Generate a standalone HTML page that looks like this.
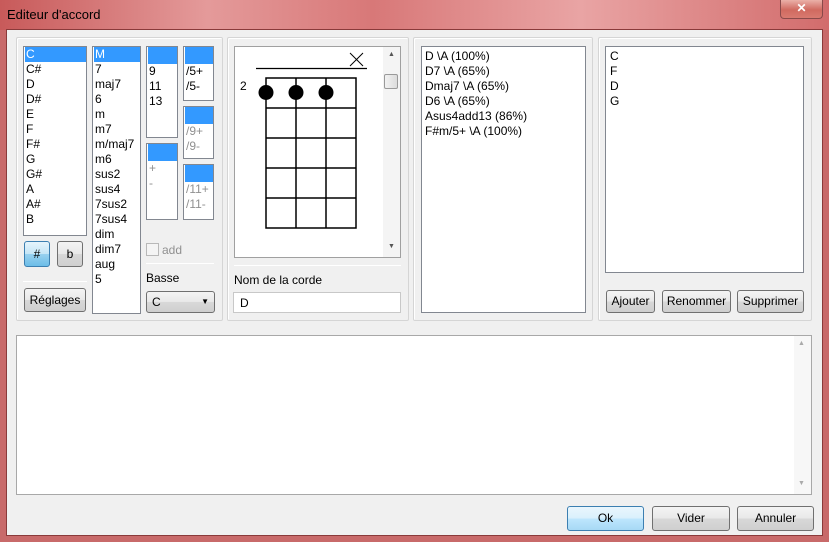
<!DOCTYPE html>
<html><head><meta charset="utf-8"><style>
*{box-sizing:border-box;margin:0;padding:0}
body{width:829px;height:542px;overflow:hidden;font-family:"Liberation Sans",sans-serif;font-size:12px;color:#000;background:#c86a6a;position:relative}
.a{position:absolute}
.title{left:0;top:0;width:829px;height:30px;background:linear-gradient(90deg,#c85a5a 0%,#e49a9a 25%,#d87878 45%,#e9a4a4 70%,#d26c6c 100%)}
.client{left:6px;top:29px;width:817px;height:507px;background:#f0f0f0;border:1px solid #8a3a3a}
.grp{border:1px solid #d5d5d5;border-radius:2px;box-shadow:inset 1px 1px 0 #fff}
.list{background:#fff;border:1px solid #828790;line-height:15px;padding-left:2px}
.list .sel{margin-left:-1px;padding-left:1px}
.sel{background:#3399ff;color:#fff;display:block;height:15px}
.sel.e{height:17px}
.g{color:#909090}
.btn{border:1px solid #707070;border-radius:3px;background:linear-gradient(#f4f4f4,#e8e8e8 50%,#d8d8d8 51%,#cfcfcf);text-align:center;line-height:20px}
.hl{height:1px;background:#d5d5d5;border-bottom:1px solid #fff}
</style></head><body>
<div class="a title"></div>
<div class="a" style="left:7px;top:7px;font-size:13px;color:#000">Editeur d'accord</div>
<div class="a" style="left:780px;top:0;width:43px;height:19px;border:1px solid #8a4a4a;border-top:none;border-radius:0 0 4px 4px;background:linear-gradient(#eab0a8,#d06a60 55%,#d87a70);color:#fff;text-align:center;font-weight:bold;font-size:12px;line-height:17px">✕</div>
<div class="a client"></div>

<!-- panel 1 -->
<div class="a grp" style="left:16px;top:37px;width:207px;height:284px"></div>
<div class="a list" style="left:23px;top:46px;width:64px;height:190px"><span class="sel">C</span>C#<br>D<br>D#<br>E<br>F<br>F#<br>G<br>G#<br>A<br>A#<br>B</div>
<div class="a list" style="left:92px;top:46px;width:49px;height:268px"><span class="sel">M</span>7<br>maj7<br>6<br>m<br>m7<br>m/maj7<br>m6<br>sus2<br>sus4<br>7sus2<br>7sus4<br>dim<br>dim7<br>aug<br>5</div>
<div class="a list" style="left:146px;top:46px;width:32px;height:92px"><span class="sel e"></span>9<br>11<br>13</div>
<div class="a list" style="left:146px;top:143px;width:32px;height:77px"><span class="sel e"></span><span class="g">+<br>-</span></div>
<div class="a list" style="left:183px;top:46px;width:31px;height:55px"><span class="sel e"></span>/5+<br>/5-</div>
<div class="a list" style="left:183px;top:106px;width:31px;height:53px"><span class="sel e"></span><span class="g">/9+<br>/9-</span></div>
<div class="a list" style="left:183px;top:164px;width:31px;height:56px"><span class="sel e"></span><span class="g">/11+<br>/11-</span></div>
<div class="a" style="left:146px;top:243px;width:13px;height:13px;border:1px solid #b8b8b8;background:#f4f4f4"></div>
<div class="a g" style="left:162px;top:243px">add</div>
<div class="a hl" style="left:146px;top:263px;width:68px"></div>
<div class="a" style="left:146px;top:271px">Basse</div>
<div class="a btn" style="left:146px;top:291px;width:69px;height:22px;text-align:left;padding-left:5px">C<span style="position:absolute;right:5px;top:0;font-size:8px">▼</span></div>
<div class="a btn" style="left:24px;top:241px;width:26px;height:26px;line-height:24px;border-color:#3c7fb1;background:linear-gradient(#e5f4fc,#c4e5f6 50%,#98d1ef 51%,#6cbde8)">#</div>
<div class="a btn" style="left:57px;top:241px;width:26px;height:26px;line-height:24px">b</div>
<div class="a hl" style="left:23px;top:281px;width:64px"></div>
<div class="a btn" style="left:24px;top:288px;width:62px;height:24px;line-height:22px">Réglages</div>

<!-- panel 2 -->
<div class="a grp" style="left:227px;top:37px;width:182px;height:284px"></div>
<div class="a" style="left:234px;top:46px;width:167px;height:212px;background:#fff;border:1px solid #a0a0a0"></div>
<div class="a" style="left:383px;top:47px;width:17px;height:210px;background:#f4f4f4"></div>
<div class="a" style="left:384px;top:74px;width:14px;height:15px;border:1px solid #9a9a9a;border-radius:2px;background:linear-gradient(90deg,#f2f2f2,#dcdcdc)"></div>
<div class="a" style="left:388px;top:51px;font-size:7px;color:#555">▲</div>
<div class="a" style="left:388px;top:243px;font-size:7px;color:#555">▼</div>
<svg class="a" style="left:0;top:0" width="829" height="542">
<line x1="256" y1="68.5" x2="367" y2="68.5" stroke="#000" stroke-width="1.3"/>
<line x1="350" y1="53" x2="363" y2="66" stroke="#000"/><line x1="363" y1="53" x2="350" y2="66" stroke="#000"/>
<g stroke="#000" stroke-width="1.5" fill="none">
<rect x="266" y="78" width="90" height="150"/>
<line x1="296" y1="78" x2="296" y2="228"/><line x1="326" y1="78" x2="326" y2="228"/>
<line x1="266" y1="108" x2="356" y2="108"/><line x1="266" y1="138" x2="356" y2="138"/><line x1="266" y1="168" x2="356" y2="168"/><line x1="266" y1="198" x2="356" y2="198"/>
</g>
<circle cx="266" cy="92.5" r="7.5"/><circle cx="296" cy="92.5" r="7.5"/><circle cx="326" cy="92.5" r="7.5"/>
<text x="240" y="90" font-family="Liberation Sans" font-size="12">2</text>
</svg>
<div class="a hl" style="left:234px;top:265px;width:167px"></div>
<div class="a" style="left:234px;top:273px">Nom de la corde</div>
<div class="a" style="left:233px;top:292px;width:168px;height:21px;background:#fff;border:1px solid #c8c8c8;padding:3px 0 0 6px">D</div>

<!-- panel 3 -->
<div class="a grp" style="left:413px;top:37px;width:180px;height:284px"></div>
<div class="a list" style="left:421px;top:46px;width:165px;height:267px;padding:2px 0 0 3px">D \A (100%)<br>D7 \A (65%)<br>Dmaj7 \A (65%)<br>D6 \A (65%)<br>Asus4add13 (86%)<br>F#m/5+ \A (100%)</div>

<!-- panel 4 -->
<div class="a grp" style="left:598px;top:37px;width:214px;height:284px"></div>
<div class="a list" style="left:605px;top:46px;width:199px;height:227px;padding:2px 0 0 4px">C<br>F<br>D<br>G</div>
<div class="a btn" style="left:606px;top:290px;width:49px;height:23px">Ajouter</div>
<div class="a btn" style="left:662px;top:290px;width:69px;height:23px">Renommer</div>
<div class="a btn" style="left:737px;top:290px;width:67px;height:23px">Supprimer</div>

<!-- textarea -->
<div class="a" style="left:16px;top:335px;width:796px;height:160px;background:#fff;border:1px solid #a8a8a8"></div>
<div class="a" style="left:794px;top:336px;width:17px;height:158px;background:#f7f7f7"></div>
<div class="a" style="left:798px;top:340px;font-size:7px;color:#aaa">▲</div>
<div class="a" style="left:798px;top:480px;font-size:7px;color:#aaa">▼</div>

<div class="a btn" style="left:567px;top:506px;width:77px;height:25px;line-height:23px;border-color:#3c7fb1;background:linear-gradient(#eaf6fd,#d9f0fc 50%,#bee6fd 51%,#a7d9f5)">Ok</div>
<div class="a btn" style="left:652px;top:506px;width:78px;height:25px;line-height:23px">Vider</div>
<div class="a btn" style="left:737px;top:506px;width:77px;height:25px;line-height:23px">Annuler</div>
</body></html>
